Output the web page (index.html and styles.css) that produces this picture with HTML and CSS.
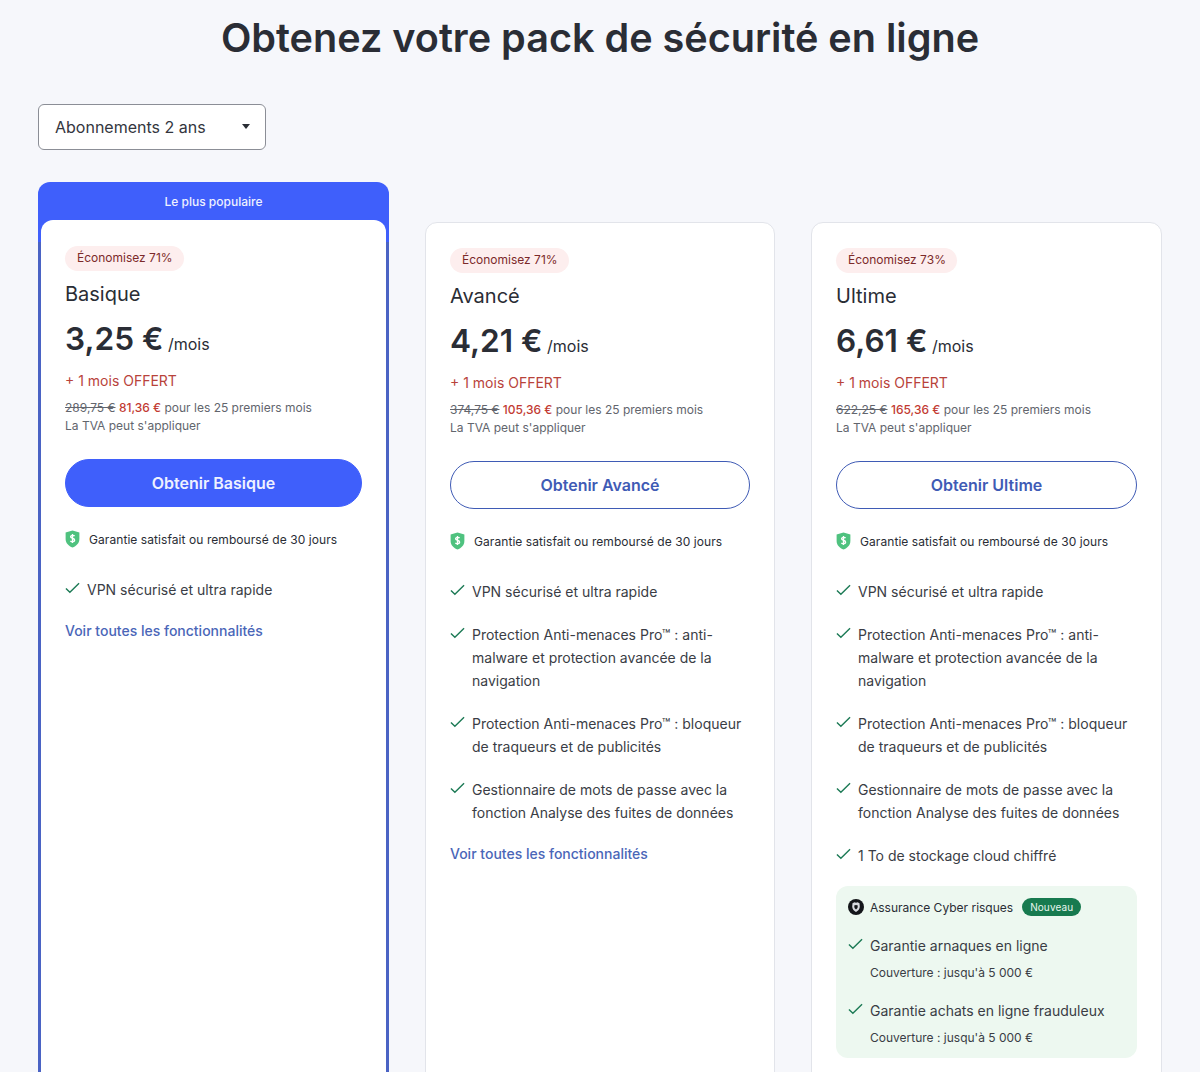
FILE: index.html
```html
<!DOCTYPE html>
<html lang="fr">
<head>
<meta charset="utf-8">
<title>Obtenez votre pack de sécurité en ligne</title>
<link rel="stylesheet" href="styles.css">
</head>
<body>
<svg class="sprite" width="0" height="0" aria-hidden="true">
  <symbol id="check" viewBox="0 0 16 12"><path d="M1 6.6 5.2 10.6 15 1" fill="none" stroke="#1c7a55" stroke-width="1.5"/></symbol>
  <symbol id="shield" viewBox="0 0 14 17"><path d="M7 .5 13.5 2.400V8.500C13.5 12.500 10.500 15.200 7 16.500 3.500 15.200.5 12.500.5 8.500V2.400Z" fill="#4fc27f"/><path d="M9 5.600C8 4.700 5.200 4.800 5.200 6.400 5.200 8.300 9 7.300 9 9.600 9 11.200 6.200 11.300 5 10.300M7 3.800V12.200" fill="none" stroke="#fff" stroke-width="1.300"/></symbol>
</svg>
<main class="page">
  <h1 class="title">Obtenez votre pack de sécurité en ligne</h1>
  <div class="select"><span>Abonnements 2 ans</span><i class="caret"></i></div>
  <div class="plans">
    <section class="plan plan-popular">
      <div class="ribbon">Le plus populaire</div>
      <div class="plan-body">
        <span class="save">Économisez 71%</span>
        <h2 class="name">Basique</h2>
        <p class="price"><strong>3,25 €</strong> <span>/mois</span></p>
        <p class="offer">+ 1 mois OFFERT</p>
        <p class="terms"><s>289,75 €</s> <b>81,36 €</b> pour les 25 premiers mois<br>La TVA peut s'appliquer</p>
        <a class="cta cta-solid">Obtenir Basique</a>
        <p class="guarantee"><svg class="shield"><use href="#shield"/></svg>Garantie satisfait ou remboursé de 30 jours</p>
        <ul class="features">
          <li><svg class="check"><use href="#check"/></svg>VPN sécurisé et ultra rapide</li>
        </ul>
        <a class="more">Voir toutes les fonctionnalités</a>
      </div>
    </section>
    <section class="plan">
      <div class="plan-body">
        <span class="save">Économisez 71%</span>
        <h2 class="name">Avancé</h2>
        <p class="price"><strong>4,21 €</strong> <span>/mois</span></p>
        <p class="offer">+ 1 mois OFFERT</p>
        <p class="terms"><s>374,75 €</s> <b>105,36 €</b> pour les 25 premiers mois<br>La TVA peut s'appliquer</p>
        <a class="cta">Obtenir Avancé</a>
        <p class="guarantee"><svg class="shield"><use href="#shield"/></svg>Garantie satisfait ou remboursé de 30 jours</p>
        <ul class="features">
          <li><svg class="check"><use href="#check"/></svg>VPN sécurisé et ultra rapide</li>
          <li><svg class="check"><use href="#check"/></svg>Protection Anti-menaces Pro™ : anti-malware et protection avancée de la navigation</li>
          <li><svg class="check"><use href="#check"/></svg>Protection Anti-menaces Pro™ : bloqueur de traqueurs et de publicités</li>
          <li><svg class="check"><use href="#check"/></svg>Gestionnaire de mots de passe avec la fonction Analyse des fuites de données</li>
        </ul>
        <a class="more">Voir toutes les fonctionnalités</a>
      </div>
    </section>
    <section class="plan">
      <div class="plan-body">
        <span class="save">Économisez 73%</span>
        <h2 class="name">Ultime</h2>
        <p class="price"><strong>6,61 €</strong> <span>/mois</span></p>
        <p class="offer">+ 1 mois OFFERT</p>
        <p class="terms"><s>622,25 €</s> <b>165,36 €</b> pour les 25 premiers mois<br>La TVA peut s'appliquer</p>
        <a class="cta">Obtenir Ultime</a>
        <p class="guarantee"><svg class="shield"><use href="#shield"/></svg>Garantie satisfait ou remboursé de 30 jours</p>
        <ul class="features">
          <li><svg class="check"><use href="#check"/></svg>VPN sécurisé et ultra rapide</li>
          <li><svg class="check"><use href="#check"/></svg>Protection Anti-menaces Pro™ : anti-malware et protection avancée de la navigation</li>
          <li><svg class="check"><use href="#check"/></svg>Protection Anti-menaces Pro™ : bloqueur de traqueurs et de publicités</li>
          <li><svg class="check"><use href="#check"/></svg>Gestionnaire de mots de passe avec la fonction Analyse des fuites de données</li>
          <li><svg class="check"><use href="#check"/></svg>1 To de stockage cloud chiffré</li>
        </ul>
        <div class="cyber">
          <div class="cyber-head">
            <svg class="cyber-logo" viewBox="0 0 16 16"><circle cx="8" cy="8" r="8" fill="#14161a"/><path d="M4.500 4.200 6.500 3.200 8 3.800 9.500 3.200 11.500 4.200 11.800 7.800C11.600 10.300 10 11.900 8 13 6 11.900 4.400 10.300 4.200 7.800Z" fill="#d8dadf"/><path d="M6.200 6.600 8 6 9.800 6.600 9.500 9 8 10.400 6.500 9Z" fill="#14161a"/></svg>
            <span>Assurance Cyber risques</span><em class="tag">Nouveau</em>
          </div>
          <ul class="features cyber-list">
            <li><svg class="check"><use href="#check"/></svg>Garantie arnaques en ligne<small>Couverture : jusqu'à 5 000 €</small></li>
            <li><svg class="check"><use href="#check"/></svg>Garantie achats en ligne frauduleux<small>Couverture : jusqu'à 5 000 €</small></li>
          </ul>
        </div>
      </div>
    </section>
  </div>
</main>
</body>
</html>
```

FILE: styles.css
```css
* { box-sizing: border-box; }
html, body { margin: 0; height: 1072px; overflow: hidden; }
body { background: #f6f7fb; color: #2a2d35; font-family: Inter, "Liberation Sans", sans-serif; }
.sprite { position: absolute; }
.page { padding: 0 38px; }
.title { margin: 0; padding-top: 14px; height: 104px; font-size: 39.6px; line-height: 48px; font-weight: 600; text-align: center; }
.select { width: 228px; height: 46px; padding: 0 16px; display: flex; align-items: center; justify-content: space-between; background: #fff; border: 1px solid #8b8e96; border-radius: 6px; font-size: 16px; color: #33363e; }
.caret { width: 0; height: 0; margin-right: -1px; margin-top: -1px; border: 4.500px solid transparent; border-top: 5px solid #2a2d35; border-bottom: 0; }
.plans { display: grid; grid-template-columns: 351px 350px 351px; gap: 36px; margin-top: 32px; height: 1000px; }
.plan { margin-top: 40px; background: #fff; border: 1px solid #e2e4ea; border-radius: 12px; }
.plan-popular { margin-top: 0; background: linear-gradient(#3f5ffb 0 60px, #4a63c4 60px); border: 0; border-radius: 12px; padding: 0 3px 2px 3px; display: flex; flex-direction: column; }
.ribbon { height: 38px; line-height: 39px; text-align: center; font-size: 12px; font-weight: 500; color: #eef1ff; }
.plan-body { padding: 25px 24px 24px; }
.plan-popular .plan-body { flex: 1; background: #fff; border-radius: 12px; padding-top: 26px; }
.save { display: inline-block; height: 25px; padding: 0 11px 0 12px; border-radius: 13px; background: #fdeeee; color: #7c2a2a; font-size: 12px; line-height: 24px; }
.name { margin: 9px 0 0; font-size: 20px; line-height: 28px; font-weight: 400; }
.price { margin: 9px 0 0; line-height: 44px; height: 44px; }
.price strong { font-size: 31.600px; font-weight: 600; }
.price span { font-size: 16px; }
.offer { margin: 10px 0 0; font-size: 14px; line-height: 20px; color: #b8433b; }
.terms { margin: 8px 0 0; font-size: 12px; line-height: 18px; color: #62656d; }
.terms s { color: #62656d; }
.terms b { font-weight: 500; color: #c23a32; }
.cta { display: block; margin-top: 24px; height: 48px; border: 1px solid #3f5bb5; border-radius: 24px; line-height: 46px; text-align: center; font-size: 16px; font-weight: 600; color: #3f5bb5; background: #fff; }
.cta-solid { background: #3f5ffb; border-color: #3f5ffb; color: #eef1ff; }
.guarantee { display: flex; align-items: center; margin: 22px 0 0; height: 20px; font-size: 12px; letter-spacing: .07px; color: #2a2d35; }
.shield { width: 15px; height: 18px; margin-right: 9px; }
.features { list-style: none; margin: 29px 0 0; padding: 0; font-size: 14px; line-height: 23px; color: #3a3d45; }
.features li { position: relative; padding-left: 22px; margin-bottom: 20px; }
.check { position: absolute; left: 0; top: 4px; width: 15px; height: 12px; }
.more { display: block; margin-top: 0; font-size: 14px; line-height: 20px; font-weight: 500; color: #4a66b8; }
.cyber { margin-top: -1px; height: 172px; padding: 12px; background: #edf8f0; border-radius: 12px; }
.cyber-head { display: flex; align-items: center; height: 18px; font-size: 12px; }
.cyber-logo { width: 16px; height: 16px; margin-right: 6px; }
.tag { margin-left: 9px; padding: 0 8px; height: 18px; border-radius: 9px; background: #177a4f; color: #e8f6ee; font-style: normal; font-size: 10px; line-height: 18px; letter-spacing: .1px; }
.cyber-list { margin-top: 18px; }
.cyber-list li { margin-bottom: 16px; }
.cyber-list small { display: block; margin-top: 6px; font-size: 12px; line-height: 20px; }
```
